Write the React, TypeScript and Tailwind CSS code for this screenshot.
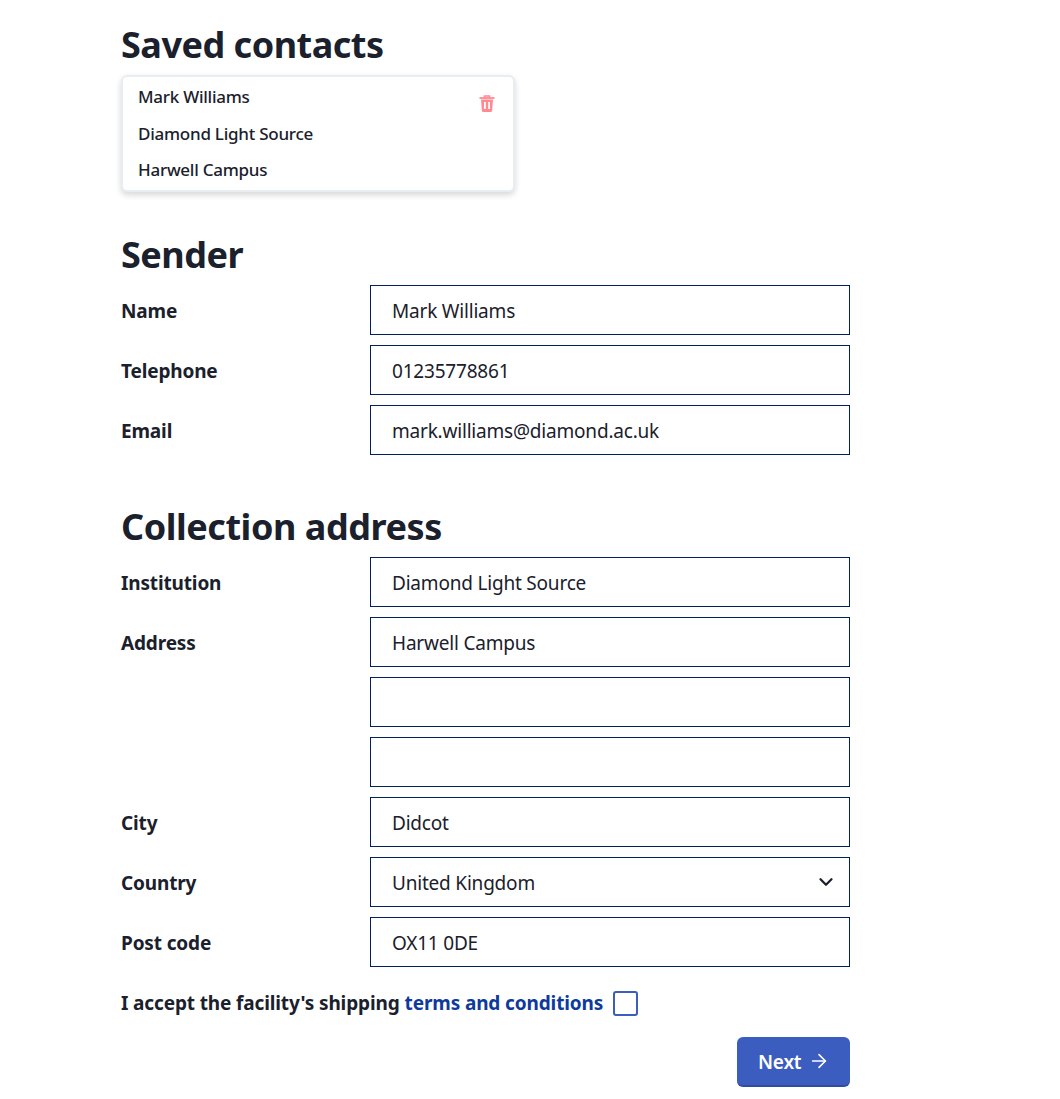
import { ArrowRight, ChevronDown } from "lucide-react";

const savedLines = ["Mark Williams", "Diamond Light Source", "Harwell Campus"];

const senderFields = [
  { label: "Name", value: "Mark Williams" },
  { label: "Telephone", value: "01235778861" },
  { label: "Email", value: "mark.williams@diamond.ac.uk" },
];

function Field({ label, value }: { label?: string; value: string }) {
  return (
    <div className="flex h-[50px] items-start">
      <label className="h-[50px] w-[249px] text-[19px] leading-[52px] font-bold tracking-[-0.15px] text-[#1a202c]">{label}</label>
      <input
        readOnly
        value={value}
        className="h-[50px] w-[480px] border border-[#002060] bg-white px-[21px] pt-[2px] text-[19px] tracking-[-0.2px] text-[#1a202c] outline-none"
      />
    </div>
  );
}

function TrashIcon() {
  return (
    <svg viewBox="0 0 16 17" className="mt-[18px] h-[17px] w-[16px] text-[#ff8a91]" fill="none">
      <path d="M5.5 2.5V1h5v1.5" stroke="currentColor" strokeWidth="1.6" />
      <path d="M0.5 3h15" stroke="currentColor" strokeWidth="1.8" />
      <path
        fillRule="evenodd"
        clipRule="evenodd"
        d="M2 4.5h12l-0.9 11.2a1.4 1.4 0 0 1-1.4 1.3H4.3a1.4 1.4 0 0 1-1.4-1.3L2 4.5ZM5 7v7h1.8V7H5Zm4.2 0v7H11V7H9.2Z"
        fill="currentColor"
      />
    </svg>
  );
}

export default function App() {
  return (
    <div className="min-h-[1099px] bg-white pl-[121px] font-['Noto_Sans','Open_Sans',sans-serif] text-[#1a202c]">
      <div className="w-[729px]">
        <h2 className="pt-[21px] text-[36px] leading-[48px] font-bold tracking-[-0.5px]">Saved contacts</h2>
        <div className="mt-[6px] flex h-[117px] w-[394px] justify-between rounded-md border-2 border-[#e8edf2] bg-white pr-[18px] pl-[15px] shadow-[0_3px_6px_rgba(0,0,0,0.16)]">
          <div className="flex flex-col pt-[2px] text-[17px] leading-[36.5px] font-medium tracking-[-0.25px]">
            {savedLines.map((line) => (
              <span key={line}>{line}</span>
            ))}
          </div>
          <TrashIcon />
        </div>

        <h2 className="mt-[39px] text-[36px] leading-[48px] font-bold tracking-[-0.5px]">Sender</h2>
        <div className="mt-[6px] flex flex-col gap-[10px]">
          {senderFields.map((f) => (
            <Field key={f.label} label={f.label} value={f.value} />
          ))}
        </div>

        <h2 className="mt-[48px] text-[36px] leading-[48px] font-bold tracking-[-0.45px]">Collection address</h2>
        <div className="mt-[6px] flex flex-col gap-[10px]">
          <Field label="Institution" value="Diamond Light Source" />
          <Field label="Address" value="Harwell Campus" />
          <Field value="" />
          <Field value="" />
          <Field label="City" value="Didcot" />
          <div className="flex h-[50px]">
            <label className="w-[249px] text-[19px] leading-[52px] font-bold tracking-[-0.15px]">Country</label>
            <div className="flex h-[50px] w-[480px] items-center justify-between border border-[#002060] pr-[12px] pl-[21px] text-[19px] tracking-[-0.2px]">
              <span className="pt-[2px]">United Kingdom</span>
              <ChevronDown className="h-[22px] w-[22px] text-[#1a202c]" strokeWidth={2.5} />
            </div>
          </div>
          <Field label="Post code" value="OX11 0DE" />
        </div>

        <div className="mt-[24px] flex h-[24px] items-center text-[19px] font-bold tracking-[-0.13px]">
          <span>I accept the facility's shipping</span>
          <a className="ml-[5px] text-[#0d3a9c]">terms and conditions</a>
          <span className="ml-[10px] h-[25px] w-[25px] rounded-[3px] border-2 border-[#3a5dbf] bg-white" />
        </div>

        <div className="mt-[22px] flex justify-end">
          <button className="flex h-[50px] w-[113px] items-center gap-[7px] rounded-md border-b-2 border-[#2f4da0] bg-[#3b5dbf] pl-[21px] text-[19px] font-semibold tracking-[-0.2px] text-white">
            <span className="pt-[2px]">Next</span>
            <ArrowRight className="h-[22px] w-[22px]" strokeWidth={1.7} />
          </button>
        </div>
      </div>
    </div>
  );
}
